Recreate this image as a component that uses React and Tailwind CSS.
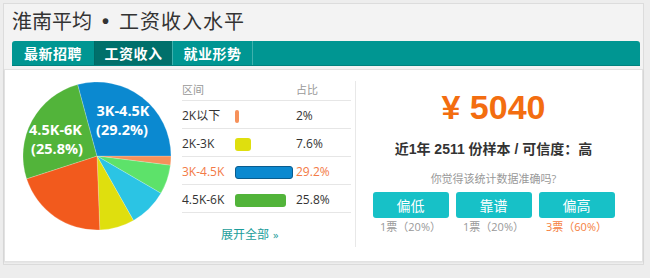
import React from "react";

const slices = [
  { p: 2, c: "#f6915a" },
  { p: 6.4, c: "#5de26a" },
  { p: 8.4, c: "#2bc4e4" },
  { p: 7.6, c: "#dfdf0e" },
  { p: 20.6, c: "#f25a1d" },
  { p: 25.8, c: "#52b43a" },
  { p: 29.2, c: "#0b89d0" },
];

function Pie() {
  const cx = 75, cy = 75, r = 74;
  let acc = 0;
  const paths = slices.map((s, i) => {
    const a0 = (acc / 100) * Math.PI * 2;
    acc += s.p;
    const a1 = (acc / 100) * Math.PI * 2;
    const x0 = cx + r * Math.cos(a0), y0 = cy + r * Math.sin(a0);
    const x1 = cx + r * Math.cos(a1), y1 = cy + r * Math.sin(a1);
    const large = s.p > 50 ? 1 : 0;
    const d = `M${cx},${cy} L${x0.toFixed(2)},${y0.toFixed(2)} A${r},${r} 0 ${large} 1 ${x1.toFixed(2)},${y1.toFixed(2)} Z`;
    return <path key={i} d={d} fill={s.c} stroke="#ffffff" strokeOpacity="0.35" strokeWidth="0.6" />;
  });
  return (
    <svg width="150" height="150" viewBox="0 0 150 150">
      {paths}
      <g fill="#ffffff" fontFamily="'Open Sans', 'DejaVu Sans', sans-serif" fontWeight="700" fontSize="14.5" textAnchor="middle">
        <text x="101" y="35">3K-4.5K</text>
        <text x="100" y="54">(29.2%)</text>
        <text x="33.5" y="54">4.5K-6K</text>
        <text x="35" y="72.5">(25.8%)</text>
      </g>
    </svg>
  );
}

const rows = [
  { l: "2K以下", w: "w-[4px]", c: "bg-[#f6915a]", v: "2%", hot: false },
  { l: "2K-3K", w: "w-[16px]", c: "bg-[#dfdf0e]", v: "7.6%", hot: false },
  { l: "3K-4.5K", w: "w-[58px]", c: "bg-[#0b89d0] border border-[#0a5c8e]", v: "29.2%", hot: true },
  { l: "4.5K-6K", w: "w-[51px]", c: "bg-[#52b43a]", v: "25.8%", hot: false },
];

export default function App() {
  const cjk = { fontFamily: "'Open Sans', 'Noto Sans CJK SC', sans-serif" };
  return (
    <div className="w-[650px] h-[278px] bg-[#ededed] pt-[3px] pl-[3px]" style={cjk}>
      <div className="w-[641px] h-[262px] bg-[#f3f3f3] border border-[#dcdcdc] flex flex-col">
        <div className="h-[37px] pl-[8px] pt-[5px] text-[20px] leading-[24px] text-[#333] flex items-start" style={{ fontFamily: "'Noto Sans CJK SC', sans-serif" }}>
          <span>淮南平均</span>
          <span className="mx-[10px] font-bold" style={{ fontFamily: "'Liberation Sans', sans-serif" }}>•</span>
          <span className="tracking-[1px]">工资收入水平</span>
        </div>
        <div className="ml-[8px] mr-[3px] h-[25px] bg-[#009692] rounded-t-[3px] flex border-b border-[#00827e]">
          <div className="w-[83px] border-r border-[#006a66] flex items-center justify-center text-white font-bold text-[14px] leading-none tracking-[0.5px]" style={{ fontFamily: "'Noto Sans CJK SC', sans-serif" }}>最新招聘</div>
          <div className="w-[78px] bg-[#00706b] border-r border-[#3fb1ad] flex items-center justify-center text-white font-bold text-[14px] leading-none tracking-[0.5px]" style={{ fontFamily: "'Noto Sans CJK SC', sans-serif" }}>工资收入</div>
          <div className="w-[80px] border-r border-[#3fb1ad] flex items-center justify-center text-white font-bold text-[14px] leading-none tracking-[0.5px]" style={{ fontFamily: "'Noto Sans CJK SC', sans-serif" }}>就业形势</div>
        </div>
        <div className="mt-[3px] h-[193px] bg-white border border-[#e2e2e2] shadow-[0_1px_2px_rgba(0,0,0,0.08)] flex">
          <div className="w-[177px] pl-[17px] pt-[11px]">
            <Pie />
          </div>
          <div className="w-[169px] pt-[11px] flex flex-col">
            <div className="h-[20px] flex items-center border-b border-[#e6e6e6] text-[11px] text-[#999]">
              <span className="w-[114px]">区间</span>
              <span>占比</span>
            </div>
            {rows.map((r) => (
              <div key={r.l} className={"h-[28px] flex items-center pt-[3px] border-b border-[#e6e6e6] text-[12px] " + (r.hot ? "text-[#f37a46]" : "text-[#333]")}>
                <span className="w-[53px]">{r.l}</span>
                <span className="w-[61px] flex items-center">
                  <span className={"block h-[13px] rounded-[3px] " + r.w + " " + r.c}></span>
                </span>
                <span>{r.v}</span>
              </div>
            ))}
            <div className="h-[44px] flex items-center pl-[39px] text-[12px] text-[#1b9d9a]">
              展开全部 <span className="ml-[4px] text-[11px]">»</span>
            </div>
          </div>
          <div className="ml-[4px] mt-[11px] mb-[14px] flex-1 border-l border-[#e8e8e8] pr-[11px] pt-[9px] flex flex-col items-center">
            <div className="h-[34px] leading-[34px] text-[34px] font-bold text-[#f36d10]" style={{ fontFamily: "'Liberation Sans', Arial, sans-serif" }}>
              ¥ 5040
            </div>
            <div className="mt-[15px] h-[20px] leading-[20px] text-[14px] font-bold text-[#333]" style={{ fontFamily: "'Liberation Sans', 'Noto Sans CJK SC', sans-serif" }}>
              近1年 2511 份样本 / 可信度：高
            </div>
            <div className="mt-[12px] h-[16px] leading-[16px] text-[11px] text-[#999]">
              你觉得该统计数据准确吗?
            </div>
            <div className="mt-[5px] flex gap-[7px]">
              {[
                ["偏低", "1票（20%）", false],
                ["靠谱", "1票（20%）", false],
                ["偏高", "3票（60%）", true],
              ].map(([b, v, hot]) => (
                <div key={b} className="w-[76px] flex flex-col items-center">
                  <div className="w-[76px] h-[26px] rounded-[3px] bg-[#17c1c7] text-white text-[14px] flex items-center justify-center" style={{ fontFamily: "'Noto Sans CJK SC', sans-serif" }}>
                    {b}
                  </div>
                  <div className={"mt-[2px] h-[14px] leading-[14px] text-[11px] " + (hot ? "text-[#f58040]" : "text-[#999]")}>
                    {v}
                  </div>
                </div>
              ))}
            </div>
          </div>
        </div>
      </div>
    </div>
  );
}
